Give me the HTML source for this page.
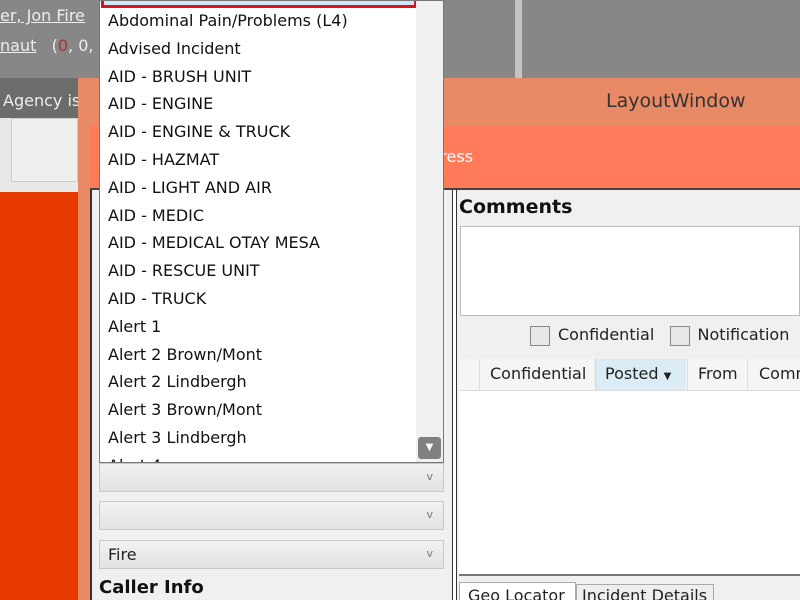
<!DOCTYPE html>
<html><head><meta charset="utf-8"><style>
*{margin:0;padding:0;box-sizing:border-box}
html,body{width:800px;height:600px;overflow:hidden}
#w{position:relative;width:800px;height:600px;overflow:hidden;background:#e63a00;font-family:Tahoma,"DejaVu Sans","Liberation Sans",sans-serif;}
.a{position:absolute}
.list div{height:27.8px;line-height:27.8px;padding-left:8px;font-size:16px;color:#111;white-space:nowrap}
.combo{position:absolute;left:99px;width:345px;height:29px;background:linear-gradient(#f2f2f2,#e2e2e2);border:1px solid #c8c8c8;font-size:16px;line-height:27px;padding-left:8px;color:#222}
.combo:after{content:"v";position:absolute;right:10px;top:-1px;font-size:11px;color:#777}
.cb{display:inline-block;width:20px;height:20px;border:1px solid #888;background:#e8e8e8;vertical-align:middle;margin-right:8px}
</style></head><body><div id="w">
<div class="a" style="left:0;top:0;width:800px;height:78px;background:#878787"></div>
<div class="a" style="left:0;top:78px;width:78px;height:40px;background:#6c6c6c"></div>
<div class="a" style="left:0;top:118px;width:78px;height:74px;background:#e8e8e8"></div>
<div class="a" style="left:11px;top:118px;width:67px;height:64px;border:1px solid #ccc;background:#efefef"></div>
<div class="a" style="left:0;top:6px;font-size:16px;color:#eee;text-decoration:underline">er, Jon Fire</div>
<div class="a" style="left:0;top:36px;font-size:16px;color:#eee;white-space:nowrap"><u>naut</u>&nbsp;&nbsp; (<span style="color:#a33">0</span>, 0, </div>
<div class="a" style="left:3px;top:91px;font-size:16px;color:#eee">Agency is</div>
<div class="a" style="left:515px;top:0;width:7px;height:78px;background:#c4c4c4"></div>
<div class="a" style="left:78px;top:78px;width:722px;height:522px;background:#e88a66"></div>
<div class="a" style="left:606px;top:90px;font-size:19px;color:#333;font-family:'DejaVu Sans',sans-serif">LayoutWindow</div>
<div class="a" style="left:90px;top:125px;width:710px;height:63px;background:#ff7b5a"></div>
<div class="a" style="left:420px;top:147px;font-size:16px;color:#fff">ddress</div>
<div class="a" style="left:90px;top:188px;width:710px;height:412px;background:#f0f0f0;border-top:2px solid #444"></div>
<div class="a" style="left:90px;top:190px;width:2px;height:410px;background:#333"></div>
<div class="a" style="left:452px;top:190px;width:5px;height:410px;border-left:1px solid #333;border-right:1px solid #333;background:#fff"></div>
<div class="a" style="left:459px;top:196px;font-size:19px;font-weight:bold;color:#111">Comments</div>
<div class="a" style="left:460px;top:226px;width:340px;height:90px;background:#fff;border:1px solid #bbb"></div>
<div class="a" style="left:530px;top:325px;font-size:16px;color:#222;white-space:nowrap"><span class="cb"></span>Confidential&nbsp;&nbsp;&nbsp;<span class="cb"></span>Notification</div>
<div class="a" style="left:459px;top:359px;width:341px;height:32px;background:#f5f5f5;border-bottom:1px solid #ddd;font-size:16px;color:#222;white-space:nowrap;overflow:hidden">
<span class="a" style="left:20px;top:0;height:31px;border-left:1px solid #ddd;padding:5px 10px">Confidential</span>
<span class="a" style="left:136px;top:0;height:31px;width:91px;background:#dcecf6;border-left:1px solid #bfe0f0;padding:5px 9px">Posted <span style="font-size:10px">&#9660;</span></span>
<span class="a" style="left:228px;top:0;height:31px;border-left:1px solid #ddd;padding:5px 10px">From</span>
<span class="a" style="left:288px;top:0;height:31px;border-left:1px solid #ddd;padding:5px 11px">Comments</span></div>
<div class="a" style="left:459px;top:391px;width:341px;height:185px;background:#fff;border-bottom:2px solid #777"></div>
<div class="a" style="left:459px;top:582px;width:117px;height:20px;background:#fff;border:1px solid #aaa;font-size:16px;padding:3px 8px;color:#222">Geo Locator</div>
<div class="a" style="left:576px;top:584px;width:138px;height:18px;background:#eee;border:1px solid #aaa;font-size:16px;padding:1px 5px;color:#222;overflow:hidden">Incident Details</div>
<div class="combo" style="top:463px"></div>
<div class="combo" style="top:501px"></div>
<div class="combo" style="top:540px">Fire</div>
<div class="a" style="left:99px;top:577px;font-size:18px;font-weight:bold;color:#111">Caller Info</div>
<div class="a" style="left:417px;top:-4px;width:26px;height:16px;background:#eee;border:1px solid #ccc"><div class="a" style="left:10px;top:4px;width:6px;height:8px;background:#29a3f0"></div></div>
<div class="a" style="left:99px;top:0;width:345px;height:463px;background:#fff;border:1px solid #777;overflow:hidden">
<div class="a" style="left:1px;top:-6px;width:316px;height:13px;border:3px solid #e0101a;background:#cfe6f6"></div>
<div class="a" style="left:316px;top:0;width:28px;height:462px;background:#f0f0f0"></div>
<div class="a" style="left:318px;top:436px;width:23px;height:22px;background:#808080;border-radius:3px;color:#fff;font-size:10px;text-align:center;line-height:22px">&#9660;</div>
<div class="list a" style="left:0;top:6px;width:316px">
<div>Abdominal Pain/Problems (L4)</div><div>Advised Incident</div><div>AID - BRUSH UNIT</div><div>AID - ENGINE</div><div>AID - ENGINE &amp; TRUCK</div><div>AID - HAZMAT</div><div>AID - LIGHT AND AIR</div><div>AID - MEDIC</div><div>AID - MEDICAL OTAY MESA</div><div>AID - RESCUE UNIT</div><div>AID - TRUCK</div><div>Alert 1</div><div>Alert 2 Brown/Mont</div><div>Alert 2 Lindbergh</div><div>Alert 3 Brown/Mont</div><div>Alert 3 Lindbergh</div><div>Alert 4</div>
</div></div>
</div></body></html>
